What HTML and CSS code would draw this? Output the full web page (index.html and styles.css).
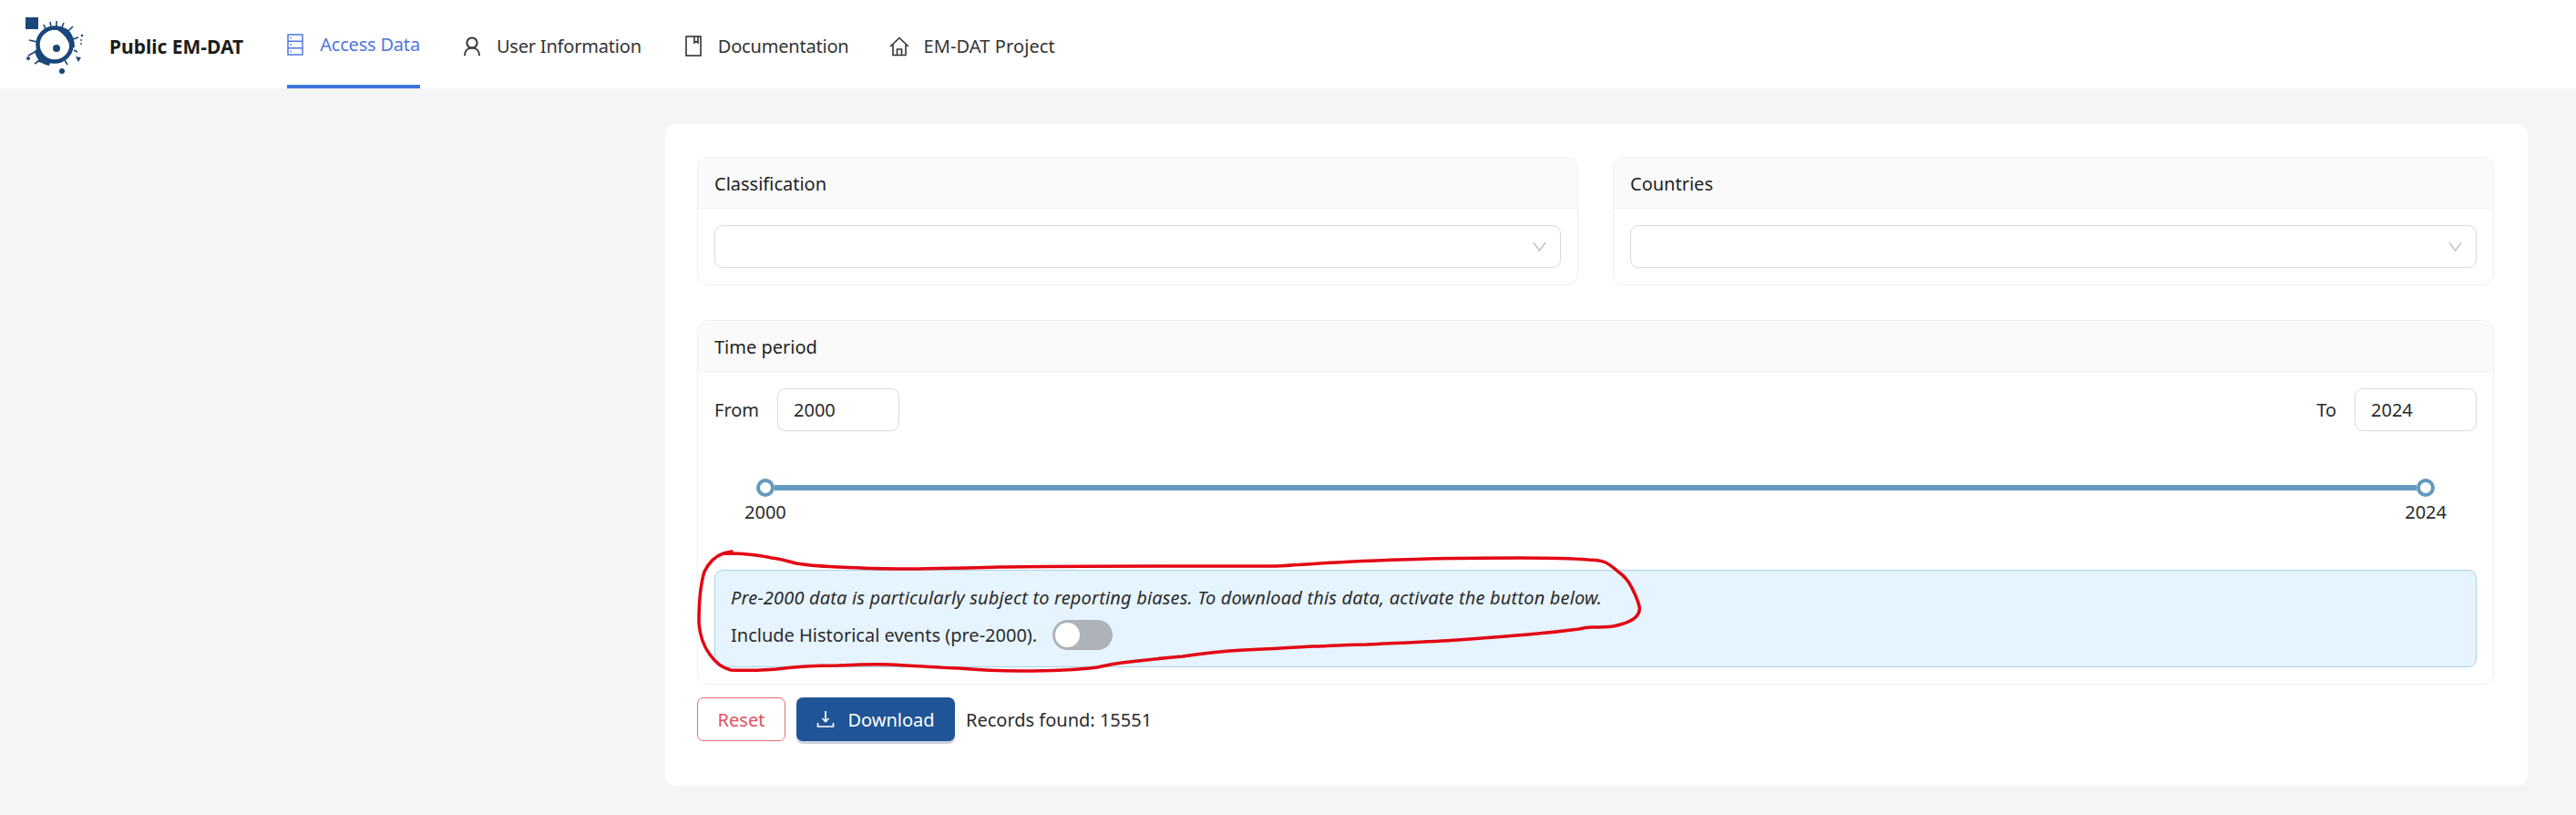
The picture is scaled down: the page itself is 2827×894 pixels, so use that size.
FILE: index.html
```html
<!DOCTYPE html>
<html lang="en">
<head>
  <meta charset="UTF-8">
  <title>Public EM-DAT</title>
  <link rel="stylesheet" href="styles.css">
</head>
<body>

  <header class="topbar">
    <svg class="logo" width="70" height="76" viewBox="0 0 70 76">
      <rect x="1" y="0" width="14" height="13" fill="#1b4679"/>
      <circle cx="33" cy="30" r="18.5" fill="none" stroke="#1b4679" stroke-width="4.5"/>
      <path d="M20 15 Q34 5 47 13 Q55 20 55 33 L50 33 Q47 20 36 14 Q28 12 22 18Z" fill="#1b4679"/>
      <path d="M14 34 Q16 46 28 50 L27 53 Q14 51 11 37Z" fill="#1b4679"/>
      <path d="M23 13 L21 8 M29 11 L28 5 M35 10 L35 4 M41 11 L43 6 M48 15 L53 10 M53 24 L59 22 M54 36 L58 38 M14 27 L5 25 M13 37 L4 42 M18 46 L11 51 M44 47 L47 52" stroke="#1b4679" stroke-width="1.6" fill="none"/>
      <circle cx="35" cy="34" r="4" fill="#1b4679"/>
      <circle cx="41" cy="59" r="3" fill="#1b4679"/>
      <circle cx="4" cy="45" r="2" fill="#1b4679"/>
      <circle cx="63" cy="20" r="1.3" fill="#1b4679"/>
      <circle cx="62" cy="25" r="0.9" fill="#1b4679"/>
      <circle cx="62" cy="29" r="0.9" fill="#1b4679"/>
      <path d="M56 43 L62 44 L59 49Z" fill="#1b4679"/>
      <path d="M14 48 L18 46 L18 50Z" fill="#1b4679"/>
    </svg>
    <span class="brand">Public EM-DAT</span>

    <nav class="menu">
      <a class="menu-item active">
        <svg width="18" height="24" viewBox="0 0 18 24" fill="none" stroke="currentColor" stroke-width="1.5">
          <rect x="1" y="1" width="16" height="22"/>
          <path d="M1 8.3H17M1 15.7H17M3.5 4.6H5M3.5 12H5M3.5 19.4H5"/>
        </svg>
        Access Data
      </a>
      <a class="menu-item">
        <svg width="18" height="22" viewBox="0 0 18 22" fill="none" stroke="currentColor" stroke-width="2">
          <circle cx="9" cy="7" r="5.6"/>
          <path d="M1 21C1 16 4 12.6 9 12.6S17 16 17 21"/>
        </svg>
        User Information
      </a>
      <a class="menu-item">
        <svg width="18" height="23" viewBox="0 0 18 23" fill="none" stroke="currentColor" stroke-width="1.6">
          <rect x="1" y="1" width="16" height="21"/>
          <path d="M10 1V8L12 6.5L14 8V1"/>
        </svg>
        Documentation
      </a>
      <a class="menu-item home">
        <svg width="22" height="22" viewBox="0 0 22 22" fill="none" stroke="currentColor" stroke-width="1.6">
          <path d="M1 11L11 1.5L21 11"/>
          <path d="M4 9V20.5H18V9"/>
          <path d="M8.5 20.5V14H13.5V20.5"/>
        </svg>
        EM-DAT Project
      </a>
    </nav>
  </header>

  <main class="content">
    <section class="card">
      <div class="filters">
        <div class="panel">
          <div class="panel-title">Classification</div>
          <div class="panel-body">
            <div class="select">
              <svg width="15" height="11" viewBox="0 0 15 11" fill="none" stroke="#bdbdbd" stroke-width="1.3"><path d="M1 1L7.5 10L14 1"/></svg>
            </div>
          </div>
        </div>
        <div class="panel">
          <div class="panel-title">Countries</div>
          <div class="panel-body">
            <div class="select">
              <svg width="15" height="11" viewBox="0 0 15 11" fill="none" stroke="#bdbdbd" stroke-width="1.3"><path d="M1 1L7.5 10L14 1"/></svg>
            </div>
          </div>
        </div>
      </div>

      <div class="panel period">
        <div class="panel-title">Time period</div>
        <div class="panel-body">
          <div class="period-row">
            <div class="period-field">
              <label>From</label>
              <div class="year-box from">2000</div>
            </div>
            <div class="period-field">
              <label>To</label>
              <div class="year-box to">2024</div>
            </div>
          </div>

          <div class="slider">
            <span class="handle"></span>
            <span class="track"></span>
            <span class="handle"></span>
          </div>
          <div class="slider-marks">
            <span>2000</span>
            <span>2024</span>
          </div>

          <div class="notice">
            <p class="notice-text">Pre-2000 data is particularly subject to reporting biases. To download this data, activate the button below.</p>
            <div class="notice-row">
              <span>Include Historical events (pre-2000).</span>
              <span class="switch"><span class="switch-knob"></span></span>
            </div>
          </div>
        </div>
      </div>

      <div class="actions">
        <button class="btn-reset">Reset</button>
        <button class="btn-download">
          <svg width="20" height="20" viewBox="0 0 20 20" fill="none" stroke="#fff" stroke-width="1.7">
            <path d="M10 1V12M6.5 9L10 12.5L13.5 9M1.5 14V18H18.5V14"/>
          </svg>
          Download
        </button>
        <span class="records">Records found: 15551</span>
      </div>
    </section>
  </main>

  <!-- trazo a mano sobre la captura -->
  <svg class="scribble" width="2827" height="894" viewBox="0 0 2827 894" fill="none">
    <path d="M803 605L794 607C785 610 778 617 773 627C769 640 767 660 767 683C768 697 773 710 779 718C786 728 794 733 802 735C820 736 835 735 852 734C875 731 895 730 919 730C940 729 960 728 977 729C1000 730 1025 732 1052 733C1075 735 1098 736 1119 736C1150 736 1180 735 1204 732C1215 730 1222 728 1231 727C1255 724 1275 722 1298 720C1325 716 1345 714 1365 713C1385 712 1410 711 1440 709C1470 708 1485 707 1500 707C1540 705 1570 704 1600 702C1630 700 1650 698 1677 696C1700 694 1718 692 1733 690C1740 688 1743 688 1747 688C1755 688 1762 688 1770 687C1780 685 1790 682 1795 677C1799 673 1800 670 1799 665C1797 657 1793 648 1787 638C1783 633 1780 630 1777 628C1772 624 1768 620 1762 617C1757 615 1750 614 1743 614C1720 612 1695 612 1667 612C1630 612 1600 612 1567 613C1530 614 1500 615 1467 617C1445 618 1420 620 1400 621C1375 621 1320 621 1276 621C1210 621 1150 621 1097 622C1055 623 1020 624 985 624C960 624 940 623 919 622C900 621 885 620 874 618C865 616 857 613 847 612C838 610 830 609 820 608C810 607 802 607 794 607" stroke="#e30613" stroke-width="3.5" stroke-linecap="round"/>
  </svg>

</body>
</html>
```

FILE: styles.css
```css
* {
  box-sizing: border-box;
}

body {
  margin: 0;
  height: 894px;
  overflow: hidden;
  position: relative;
  font-family: "Noto Sans", Arial, sans-serif;
  font-size: 20px;
  background-color: #f5f5f5;
  color: #2b2b2b;
}

.topbar {
  display: flex;
  align-items: center;
  height: 97px;
  padding-left: 27px;
  background: #fff;
}

.logo {
  align-self: flex-start;
  margin-top: 19px;
  flex-shrink: 0;
}

.brand {
  margin-left: 23px;
  padding-top: 4px;
  font-size: 21px;
  font-weight: 700;
  color: #1c1c1c;
}

.menu {
  display: flex;
  height: 100%;
  margin-left: 48px;
  gap: 48px;
  letter-spacing: -0.2px;
}

.menu-item {
  display: flex;
  align-items: center;
  gap: 18px;
  padding-top: 4px;
  color: #333;
}

.menu-item.active {
  color: #4f78dc;
  border-bottom: 4px solid #3f74dc;
}

.menu-item.home {
  gap: 15px;
  margin-left: -3px;
  letter-spacing: 0.1px;
}

.content {
  padding: 39px 53px 0 730px;
}

.card {
  height: 726px;
  padding: 36px 37px 0 35px;
  background: #fff;
  border-radius: 12px;
}

.filters {
  display: flex;
  gap: 38px;
  margin-bottom: 38px;
}

.filters .panel {
  flex: 1;
}

.panel {
  border: 1px solid #f0f0f0;
  border-radius: 12px;
  overflow: hidden;
}

.panel-title {
  height: 56px;
  padding-left: 18px;
  line-height: 57px;
  background: #fafafa;
  border-bottom: 1px solid #f0f0f0;
  color: #1f1f1f;
}

.panel-body {
  padding: 18px;
}

.select {
  display: flex;
  align-items: center;
  justify-content: flex-end;
  height: 47px;
  padding-right: 15px;
  border: 1px solid #d9d9d9;
  border-radius: 9px;
}

.period-row {
  display: flex;
  justify-content: space-between;
}

.period-field {
  display: flex;
  align-items: center;
  gap: 20px;
}

.year-box {
  height: 47px;
  width: 134px;
  padding-left: 17px;
  line-height: 45px;
  border: 1px solid #d9d9d9;
  border-radius: 9px;
}

.slider {
  display: flex;
  align-items: center;
  margin: 52px 46px 0 46px;
}

.handle {
  width: 20px;
  height: 20px;
  flex-shrink: 0;
  background: #fff;
  border: 4px solid #6499bf;
  border-radius: 50%;
}

.track {
  flex: 1;
  height: 6px;
  background: #6499bf;
}

.slider-marks {
  display: flex;
  justify-content: space-between;
  margin: 3px 33px 0 33px;
  line-height: 28px;
}

.notice {
  height: 107px;
  margin-top: 49px;
  padding: 16px 17px 0;
  background: #e6f4ff;
  border: 1px solid #a9d0e8;
  border-radius: 9px;
}

.notice-text {
  margin: 0 0 10px;
  line-height: 28px;
  font-style: italic;
  letter-spacing: 0.17px;
}

.notice-row {
  display: flex;
  align-items: center;
  gap: 17px;
}

.switch {
  display: flex;
  align-items: center;
  width: 66px;
  height: 33px;
  padding-left: 3px;
  background: #adb3b8;
  border-radius: 17px;
}

.switch-knob {
  width: 27px;
  height: 27px;
  background: #fff;
  border-radius: 50%;
}

.actions {
  display: flex;
  align-items: center;
  gap: 12px;
  margin-top: 14px;
}

.actions button {
  height: 48px;
  font-family: inherit;
  font-size: 20px;
  border-radius: 7px;
}

.btn-reset {
  width: 97px;
  background: #fff;
  color: #e5505f;
  border: 1px solid #e8697a;
}

.btn-download {
  display: flex;
  align-items: center;
  justify-content: center;
  gap: 14px;
  width: 174px;
  background-color: #1f5596;
  color: #fff;
  border: none;
  box-shadow: 0 3px 0 rgba(5, 30, 80, 0.2);
}

.scribble {
  position: absolute;
  top: 0;
  left: 0;
  pointer-events: none;
}
```
